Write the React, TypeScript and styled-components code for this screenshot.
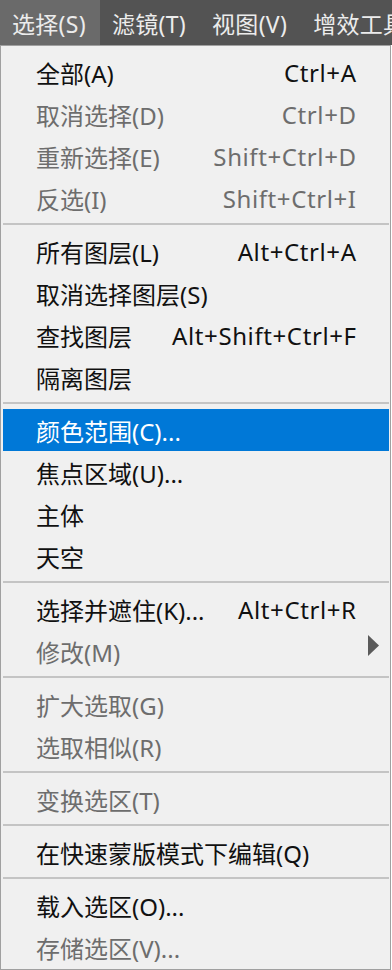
import React from "react";
import styled, { createGlobalStyle } from "styled-components";

const Global = createGlobalStyle`
  html, body { margin: 0; padding: 0; background: #ffffff; }
  body { font-family: "Noto Sans", "Noto Sans CJK SC", sans-serif; }
  * { box-sizing: border-box; }
`;

const Page = styled.div`
  width: 392px;
  height: 970px;
  overflow: hidden;
  display: flex;
  flex-direction: column;
`;

const MenuBar = styled.div`
  height: 45px;
  background: #535353;
  display: flex;
  align-items: stretch;
  white-space: nowrap;
  overflow: hidden;
  flex-shrink: 0;
`;

const BarItem = styled.div<{ $active?: boolean }>`
  display: flex;
  align-items: center;
  padding: 0 14px 0 12px;
  font-size: 23px;
  letter-spacing: 0.3px;
  color: #ececec;
  background: ${(p) => (p.$active ? "#6a6a6a" : "transparent")};
  flex-shrink: 0;
`;

const Menu = styled.div`
  width: 391px;
  border: 1px solid #a0a0a0;
  background: #f0f0f0;
  padding: 5px 1px 0 2px;
  flex: 1;
  display: flex;
  flex-direction: column;
`;

const Row = styled.div<{ $hl?: boolean; $disabled?: boolean }>`
  height: 42px;
  flex-shrink: 0;
  display: flex;
  align-items: center;
  padding: 0 33px 0 33px;
  font-size: 24px;
  white-space: nowrap;
  background: ${(p) => (p.$hl ? "#0078d7" : "transparent")};
  color: ${(p) => (p.$hl ? "#ffffff" : p.$disabled ? "#6d6d6d" : "#111111")};
`;

const Label = styled.span`
  flex: 1;
`;

const Shortcut = styled.span`
  letter-spacing: 0.6px;
  margin-right: -0.6px;
`;

const Arrow = styled.svg`
  width: 11px;
  height: 21px;
  margin-right: -23px;
  margin-top: -12px;
`;

const Separator = styled.div`
  height: 2px;
  margin: 4px 0 5px;
  background: #c4c4c4;
  flex-shrink: 0;
`;

type Item = { label: string; shortcut?: string; disabled?: boolean; hl?: boolean; sub?: boolean };

const sections: Item[][] = [
  [
    { label: "全部(A)", shortcut: "Ctrl+A" },
    { label: "取消选择(D)", shortcut: "Ctrl+D", disabled: true },
    { label: "重新选择(E)", shortcut: "Shift+Ctrl+D", disabled: true },
    { label: "反选(I)", shortcut: "Shift+Ctrl+I", disabled: true },
  ],
  [
    { label: "所有图层(L)", shortcut: "Alt+Ctrl+A" },
    { label: "取消选择图层(S)" },
    { label: "查找图层", shortcut: "Alt+Shift+Ctrl+F" },
    { label: "隔离图层" },
  ],
  [
    { label: "颜色范围(C)...", hl: true },
    { label: "焦点区域(U)..." },
    { label: "主体" },
    { label: "天空" },
  ],
  [
    { label: "选择并遮住(K)...", shortcut: "Alt+Ctrl+R" },
    { label: "修改(M)", disabled: true, sub: true },
  ],
  [
    { label: "扩大选取(G)", disabled: true },
    { label: "选取相似(R)", disabled: true },
  ],
  [{ label: "变换选区(T)", disabled: true }],
  [{ label: "在快速蒙版模式下编辑(Q)" }],
  [
    { label: "载入选区(O)..." },
    { label: "存储选区(V)...", disabled: true },
  ],
];

export default function App() {
  return (
    <Page>
      <Global />
      <MenuBar>
        <BarItem $active>选择(S)</BarItem>
        <BarItem>滤镜(T)</BarItem>
        <BarItem>视图(V)</BarItem>
        <BarItem>增效工具</BarItem>
      </MenuBar>
      <Menu>
        {sections.map((sec, si) => (
          <React.Fragment key={si}>
            {si > 0 && <Separator />}
            {sec.map((it) => (
              <Row key={it.label} $hl={it.hl} $disabled={it.disabled}>
                <Label>{it.label}</Label>
                {it.shortcut && <Shortcut>{it.shortcut}</Shortcut>}
                {it.sub && (
                  <Arrow viewBox="0 0 11 21">
                    <polygon points="0,0 11,10.5 0,21" fill="#5a5a5a" />
                  </Arrow>
                )}
              </Row>
            ))}
          </React.Fragment>
        ))}
      </Menu>
    </Page>
  );
}
